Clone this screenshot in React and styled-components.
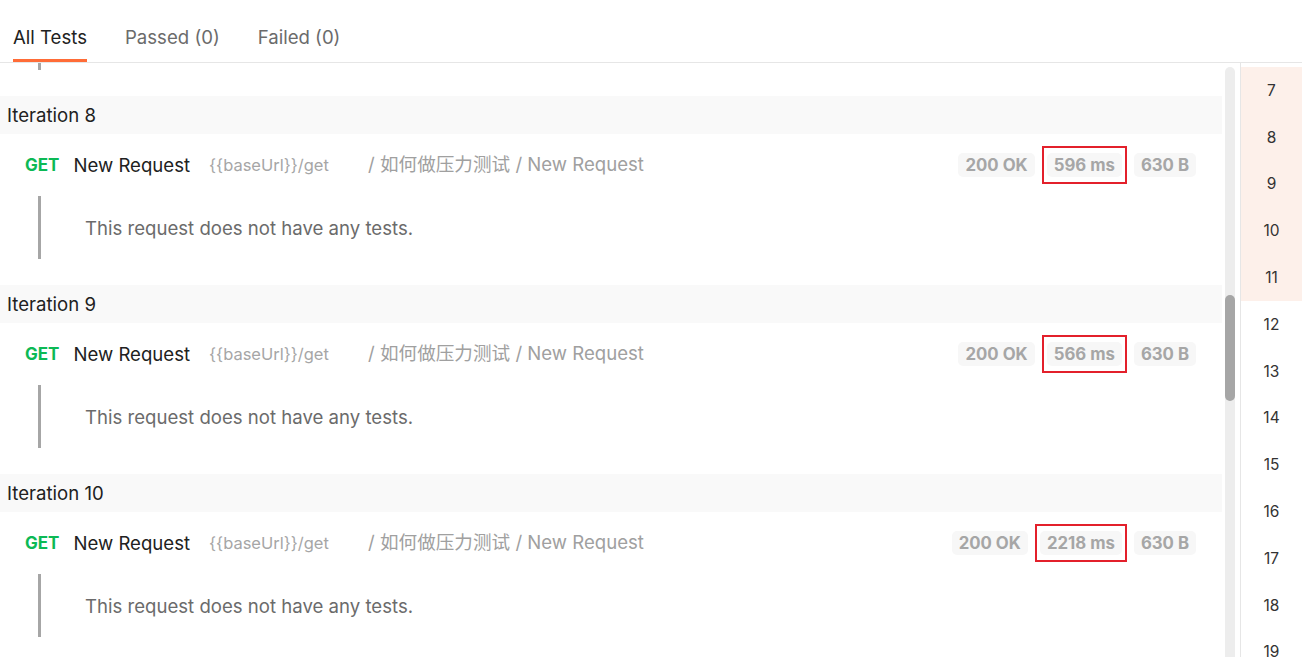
import React from "react"
import styled, { createGlobalStyle } from "styled-components"

const GlobalStyle = createGlobalStyle`
  html, body {
    margin: 0;
    padding: 0;
    background: #ffffff;
    overflow: hidden;
  }
  body {
    font-family: Inter, "Noto Sans CJK SC", sans-serif;
    color: #212121;
  }
`

const Page = styled.div`
  width: 1302px;
  height: 657px;
  display: flex;
  flex-direction: column;
  overflow: hidden;
`

const TabBar = styled.div`
  height: 62px;
  flex-shrink: 0;
  display: flex;
  align-items: stretch;
  gap: 38px;
  padding-left: 13px;
  border-bottom: 1px solid #e6e6e6;
`

const Tab = styled.div`
  display: flex;
  align-items: center;
  padding-top: 14px;
  font-size: 18.6px;
  color: ${p => (p.active ? "#212121" : "#6b6b6b")};
  border-bottom: 3px solid ${p => (p.active ? "#ff6c37" : "transparent")};
  box-sizing: border-box;
`

const Body = styled.div`
  flex: 1;
  display: flex;
  min-height: 0;
`

const List = styled.div`
  width: 1222px;
  flex-shrink: 0;
  overflow: hidden;
`

const ScrollTrack = styled.div`
  width: 10px;
  margin: 4px 4px 0 3px;
  background: #ededed;
  border-radius: 5px 5px 0 0;
  position: relative;
`

const ScrollThumb = styled.div`
  position: absolute;
  left: 0;
  top: 228px;
  width: 10px;
  height: 106px;
  border-radius: 5px;
  background: #a6a6a6;
`

const Side = styled.div`
  flex: 1;
  border-left: 1px solid #e6e6e6;
  margin-left: 1px;
  padding-top: 4px;
  overflow: hidden;
`

const SideRow = styled.div`
  height: 46.8px;
  display: flex;
  align-items: center;
  justify-content: center;
  font-size: 15.5px;
  color: #333333;
  background: ${p => (p.hot ? "#fdf0ea" : "transparent")};
`

const IterationSection = styled.section`
  margin-bottom: 26px;
`

const IterationHeader = styled.div`
  height: 38px;
  display: flex;
  align-items: center;
  padding-left: 7px;
  background: #f9f9f9;
  font-size: 18.6px;
  color: #212121;
`

const RequestRow = styled.div`
  height: 62px;
  display: flex;
  align-items: center;
  padding: 0 26px 0 25px;
`

const Method = styled.span`
  font-size: 17px;
  font-weight: 700;
  color: #0cb955;
  margin-right: 14px;
`

const RequestName = styled.span`
  font-size: 18.6px;
  color: #212121;
  margin-right: 19px;
`

const Url = styled.span`
  font-size: 16.5px;
  color: #a6a6a6;
  width: 159px;
`

const Path = styled.span`
  font-size: 18.6px;
  line-height: 22px;
  margin-bottom: 3px;
  color: #a0a0a0;
`

const Badges = styled.div`
  margin-left: auto;
  display: flex;
  gap: 12px;
`

const Badge = styled.span`
  position: relative;
  height: 24px;
  padding: 0 7px;
  display: flex;
  align-items: center;
  background: #f7f7f7;
  border-radius: 5px;
  font-size: 16.8px;
  font-weight: 700;
  color: #a6a6a6;

  ${p =>
    p.marked &&
    `
    &::after {
      content: "";
      position: absolute;
      inset: -7px -5px;
      border: 2px solid #e3202b;
    }
  `}
`

const TestsBar = styled.div`
  height: ${p => p.h || 63}px;
  margin-left: 38px;
  border-left: 3px solid #a6a6a6;
  display: flex;
  align-items: center;
  padding-left: 44px;
  font-size: 18.6px;
  color: #6b6b6b;
`

const Tail = styled(TestsBar)`
  margin-bottom: 26px;
`

const iterations = [
  { n: 8, ms: "596 ms" },
  { n: 9, ms: "566 ms" },
  { n: 10, ms: "2218 ms" },
]

const sideRows = [7, 8, 9, 10, 11, 12, 13, 14, 15, 16, 17, 18, 19]

export default function App() {
  return (
    <Page>
      <GlobalStyle />
      <TabBar>
        <Tab active>All Tests</Tab>
        <Tab>Passed (0)</Tab>
        <Tab>Failed (0)</Tab>
      </TabBar>
      <Body>
        <List>
          <Tail h={7} />
          {iterations.map(it => (
            <IterationSection key={it.n}>
              <IterationHeader>Iteration {it.n}</IterationHeader>
              <RequestRow>
                <Method>GET</Method>
                <RequestName>New Request</RequestName>
                <Url>{"{{baseUrl}}/get"}</Url>
                <Path>/ 如何做压力测试 / New Request</Path>
                <Badges>
                  <Badge>200 OK</Badge>
                  <Badge marked>{it.ms}</Badge>
                  <Badge>630 B</Badge>
                </Badges>
              </RequestRow>
              <TestsBar>This request does not have any tests.</TestsBar>
            </IterationSection>
          ))}
        </List>
        <ScrollTrack>
          <ScrollThumb />
        </ScrollTrack>
        <Side>
          {sideRows.map(n => (
            <SideRow key={n} hot={n <= 11}>
              {n}
            </SideRow>
          ))}
        </Side>
      </Body>
    </Page>
  )
}
